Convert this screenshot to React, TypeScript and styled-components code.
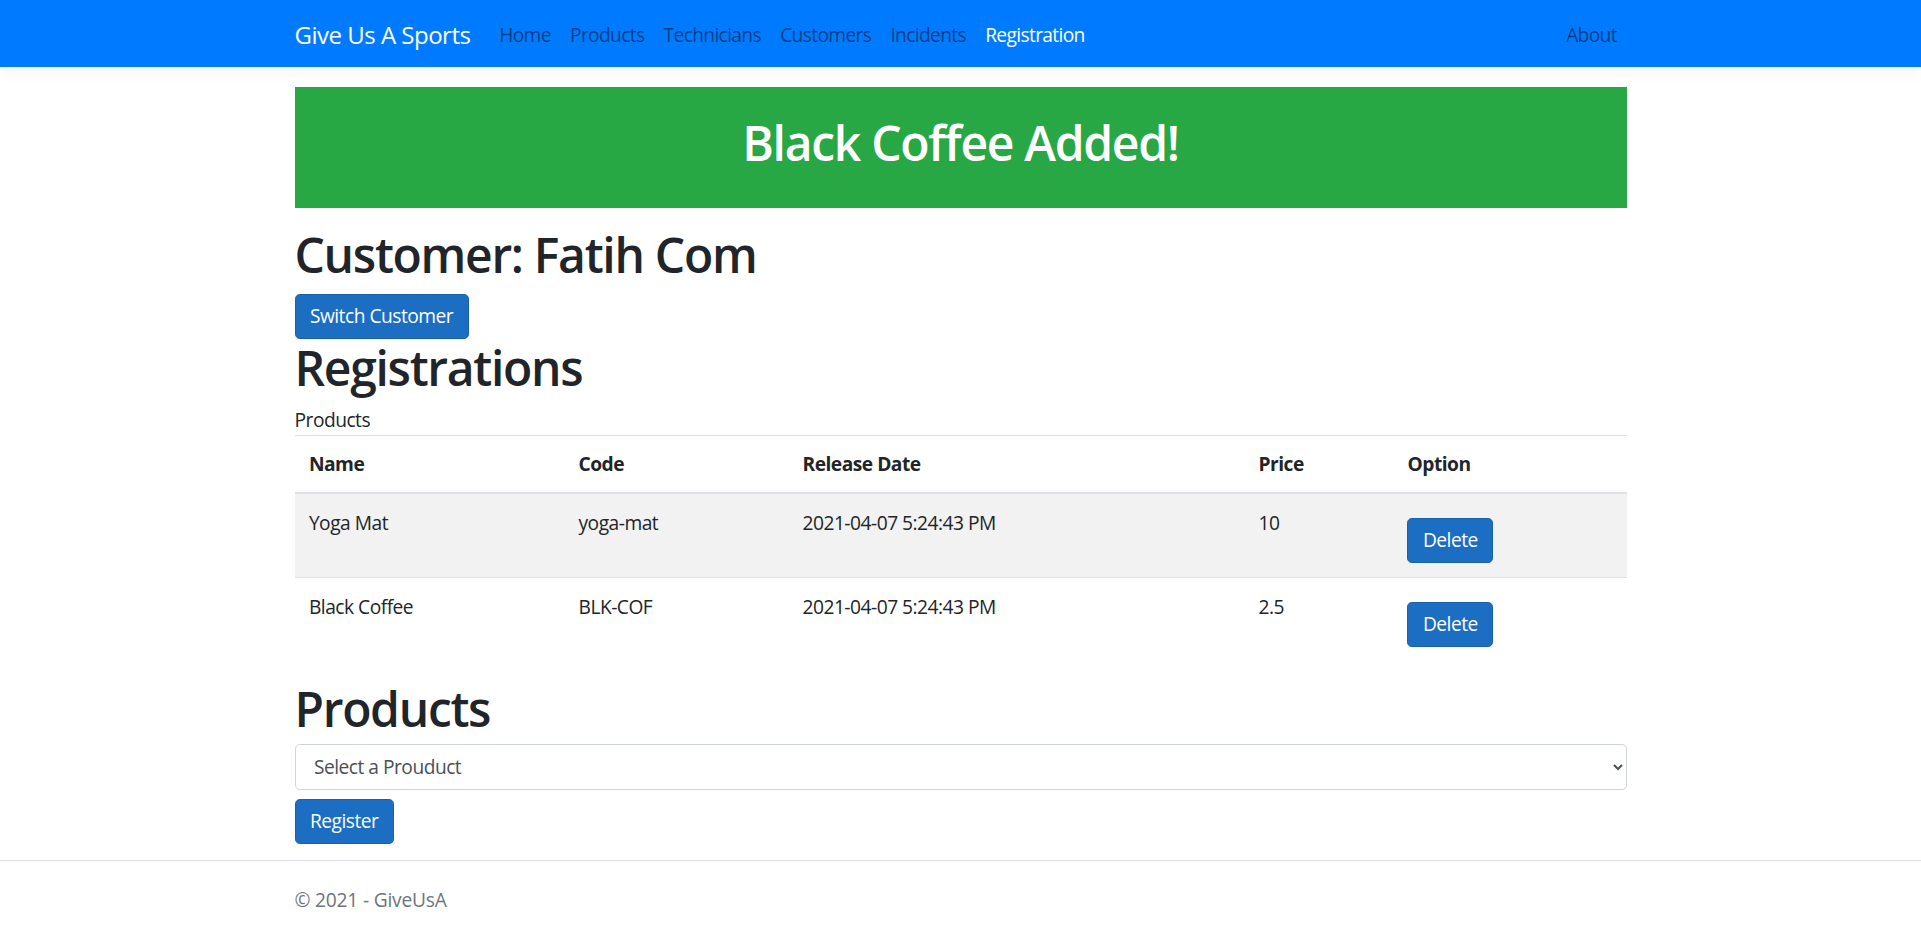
import React from 'react';
import styled, { createGlobalStyle } from 'styled-components';

const FONT = `"Segoe UI", "Open Sans", "Noto Sans", "Liberation Sans", sans-serif`;

const Global = createGlobalStyle`
  *, *::before, *::after { box-sizing: border-box; }
  html, body { margin: 0; padding: 0; }
  body {
    font-family: ${FONT};
    font-size: 19.2px;
    line-height: 1.5;
    letter-spacing: -0.5px;
    color: #212529;
    background: #fff;
  }
`;

const Page = styled.div`
  min-height: 100vh;
  display: flex;
  flex-direction: column;
`;

const Container = styled.div`
  width: 1332px;
  margin: 0 auto;
`;

const NavBar = styled.header`
  background: #007bff;
  height: 67px;
  margin-bottom: 19.8px;
  box-shadow: 0 4.8px 14.4px rgba(0, 0, 0, 0.05);
`;

const NavInner = styled(Container)`
  display: flex;
  align-items: center;
  height: 100%;
  padding-top: 3px;
`;

const Brand = styled.a`
  font-size: 24px;
  line-height: 36px;
  letter-spacing: -0.5px;
  color: #fff;
  margin-right: 19.2px;
  text-decoration: none;
  white-space: nowrap;
`;

const NavList = styled.nav`
  display: flex;
  flex: 1;
  align-items: center;
`;

const NavLink = styled.a<{ $active?: boolean }>`
  padding: 0 9.6px;
  line-height: 28.8px;
  letter-spacing: -0.65px;
  color: ${(p) => (p.$active ? '#fff' : 'rgba(0, 0, 0, 0.5)')};
  text-decoration: none;
  white-space: nowrap;
`;

const Main = styled(Container)`
  padding-bottom: 10px;
`;

const Banner = styled.div`
  background: #28a745;
  color: #fff;
  text-align: center;
  padding: 26.9px 0;
  margin-bottom: 18.6px;
`;

const H1 = styled.h1<{ $mb?: number }>`
  font-size: 48px;
  font-weight: 600;
  letter-spacing: -1.3px;
  line-height: 1.2;
  margin: 0 0 ${(p) => (p.$mb ?? 9.6)}px;
`;

const Button = styled.button`
  display: inline-block;
  font-family: ${FONT};
  font-size: 19.2px;
  line-height: 28.8px;
  letter-spacing: -0.5px;
  padding: 7.2px 14.4px;
  color: #fff;
  background: #1b6ec2;
  border: 1.2px solid #1861ac;
  border-radius: 4.8px;
  cursor: pointer;
`;

const Label = styled.div`
  line-height: 28.8px;
`;

const Table = styled.table`
  width: 100%;
  border-collapse: collapse;
  margin-bottom: 19.2px;
  color: #212529;

  th,
  td {
    padding: 14.4px;
    border-top: 1.2px solid #dee2e6;
    vertical-align: top;
    text-align: left;
  }

  thead th {
    font-weight: 700;
    vertical-align: bottom;
    padding-bottom: 13.4px;
    border-bottom: 2.4px solid #dee2e6;
  }

  tbody tr:nth-of-type(odd) {
    background: rgba(0, 0, 0, 0.05);
  }
`;

const CellForm = styled.form`
  display: flex;
  margin: 9px 0 0;
`;

const ProductForm = styled.form`
  display: flex;
  flex-direction: column;
  align-items: flex-start;
  gap: 9.6px;
`;

const Select = styled.select`
  display: block;
  width: 100%;
  height: 45.6px;
  padding: 7.2px 14.4px;
  font-family: ${FONT};
  font-size: 19.2px;
  line-height: 28.8px;
  letter-spacing: -0.5px;
  color: #495057;
  background: #fff;
  border: 1.2px solid #ced4da;
  border-radius: 4.8px;
`;

const Footer = styled.footer`
  margin-top: auto;
  border-top: 1.2px solid #dee2e6;
  padding-top: 6px;
  line-height: 66px;
  letter-spacing: -0.2px;
  color: #6c757d;
  white-space: nowrap;
`;

const rows = [
  { name: 'Yoga Mat', code: 'yoga-mat', date: '2021-04-07 5:24:43 PM', price: '10' },
  { name: 'Black Coffee', code: 'BLK-COF', date: '2021-04-07 5:24:43 PM', price: '2.5' },
];

const navItems = ['Home', 'Products', 'Technicians', 'Customers', 'Incidents', 'Registration'];

export default function App() {
  return (
    <Page>
      <Global />
      <NavBar>
        <NavInner>
          <Brand href="#">Give Us A Sports</Brand>
          <NavList>
            {navItems.map((n) => (
              <NavLink key={n} href="#" $active={n === 'Registration'}>
                {n}
              </NavLink>
            ))}
          </NavList>
          <NavLink href="#">About</NavLink>
        </NavInner>
      </NavBar>
      <Main>
        <Banner>
          <H1>Black Coffee Added!</H1>
        </Banner>
        <H1>Customer: Fatih Com</H1>
        <Button>Switch Customer</Button>
        <H1>Registrations</H1>
        <Label>Products</Label>
        <Table>
          <colgroup>
            <col style={{ width: 269.6 }} />
            <col style={{ width: 224 }} />
            <col style={{ width: 456 }} />
            <col style={{ width: 149 }} />
            <col style={{ width: 233.4 }} />
          </colgroup>
          <thead>
            <tr>
              <th>Name</th>
              <th>Code</th>
              <th>Release Date</th>
              <th>Price</th>
              <th>Option</th>
            </tr>
          </thead>
          <tbody>
            {rows.map((r) => (
              <tr key={r.code}>
                <td>{r.name}</td>
                <td>{r.code}</td>
                <td>{r.date}</td>
                <td>{r.price}</td>
                <td>
                  <CellForm onSubmit={(e) => e.preventDefault()}>
                    <Button type="submit">Delete</Button>
                  </CellForm>
                </td>
              </tr>
            ))}
          </tbody>
        </Table>
        <H1 $mb={6}>Products</H1>
        <ProductForm onSubmit={(e) => e.preventDefault()}>
          <Select defaultValue="">
            <option value="">Select a Prouduct</option>
            <option value="yoga-mat">Yoga Mat</option>
            <option value="BLK-COF">Black Coffee</option>
          </Select>
          <Button type="submit">Register</Button>
        </ProductForm>
      </Main>
      <Footer>
        <Container>© 2021 - GiveUsA</Container>
      </Footer>
    </Page>
  );
}
